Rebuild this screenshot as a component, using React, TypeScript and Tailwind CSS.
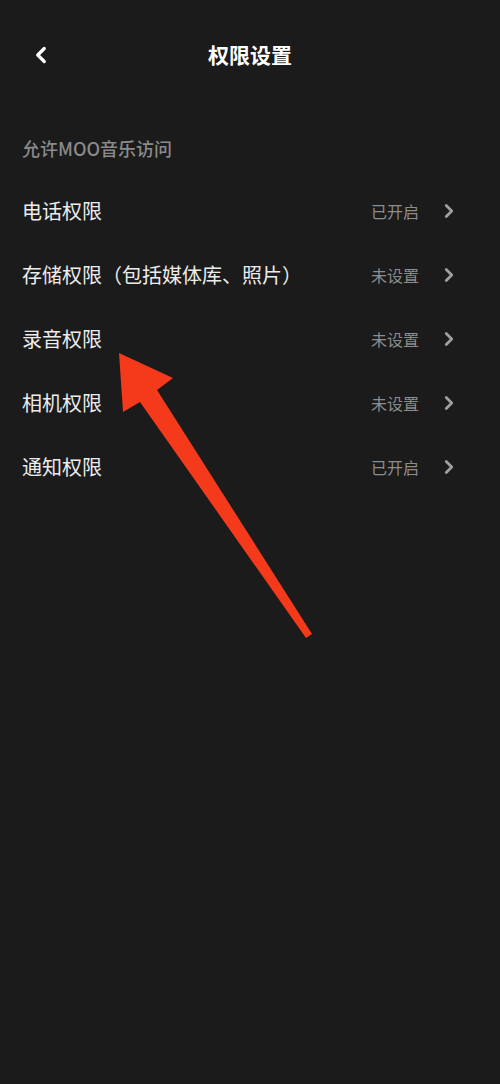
import { ChevronLeft, ChevronRight } from "lucide-react";

const rows = [
  { label: "电话权限", status: "已开启" },
  { label: "存储权限（包括媒体库、照片）", status: "未设置" },
  { label: "录音权限", status: "未设置" },
  { label: "相机权限", status: "未设置" },
  { label: "通知权限", status: "已开启" },
];

const App = () => {
  return (
    <div
      className="relative w-[500px] h-[1084px] bg-[#1b1b1b] overflow-hidden"
      style={{ fontFamily: '"Noto Sans CJK SC", "Noto Sans", sans-serif' }}
    >
      {/* Header */}
      <div className="relative h-[108px] flex items-center justify-center">
        <ChevronLeft className="absolute left-[28px] top-[42px] w-[26px] h-[26px] text-white" strokeWidth={3} />
        <h1 className="text-[21px] font-bold text-white leading-none">权限设置</h1>
      </div>

      {/* Section label */}
      <div className="pt-[26px] pb-[17px] px-[22px]">
        <p className="text-[18px] leading-[28px] text-[#8a8a8a] font-medium">允许MOO音乐访问</p>
      </div>

      {/* Rows */}
      <div>
        {rows.map((row, index) => (
          <div key={index} className="h-[64px] flex items-center pl-[22px] pr-[40px]">
            <span className="flex-1 text-[20px] text-[#ececec]">{row.label}</span>
            <span className="text-[16px] text-[#8c8c8c] mr-[19px]">{row.status}</span>
            <ChevronRight className="w-[22px] h-[22px] text-[#a0a0a0]" strokeWidth={3} />
          </div>
        ))}
      </div>

      {/* Annotation arrow */}
      <svg className="absolute left-0 top-0 pointer-events-none" width="500" height="1084" viewBox="0 0 500 1084">
        <polygon
          points="119,353 173,378 157,390 312,634 306,638 140,402 123,412"
          fill="#f53a1c"
        />
      </svg>
    </div>
  );
};

export default App;
